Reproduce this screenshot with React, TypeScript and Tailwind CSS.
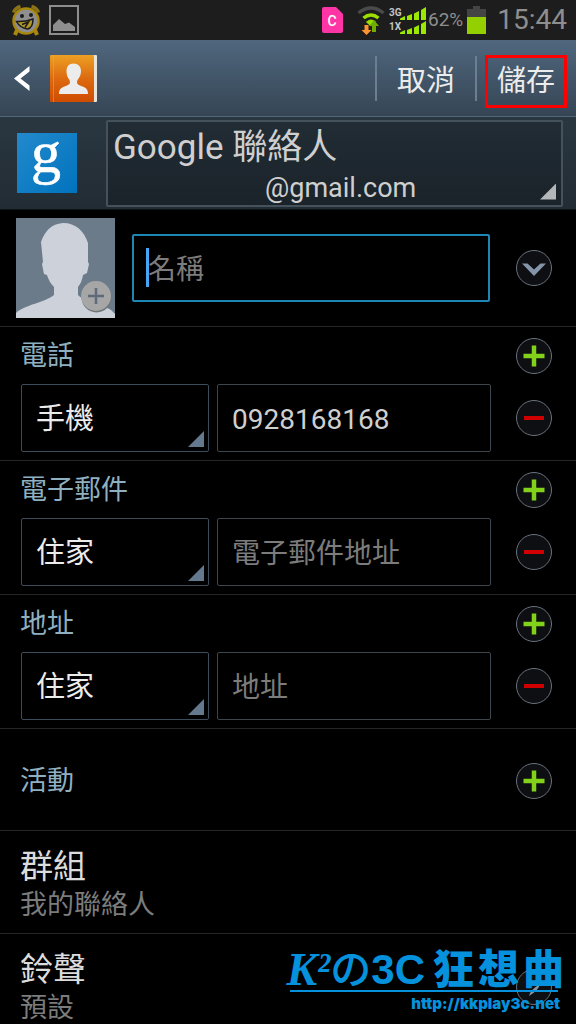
import { useState } from "react"
import type { ReactNode } from "react"

function AlarmIcon() {
  return (
    <svg width="30" height="32" viewBox="0 0 30 32" aria-hidden="true">
      <path d="M2.500 8.500Q4 4 9.500 2.500M20.500 2.500Q26 4 27.500 8.500" stroke="#8a7216" strokeWidth="3.500" fill="none" />
      <path d="M6 26l-2 5M24 26l2 5" stroke="#a8870e" strokeWidth="4" />
      <circle cx="15" cy="17" r="12.500" fill="#8f8f8f" stroke="#a8870e" strokeWidth="2.500" />
      <circle cx="11" cy="12" r="2" fill="#1a1a1a" />
      <circle cx="20" cy="11" r="2" fill="#1a1a1a" />
      <path d="M5.500 17.500Q14 18 22 15Q22 24 16.500 25Q9 24 5.500 17.500z" fill="#b09526" stroke="#1a1a1a" strokeWidth="1.500" />
      <path d="M11 20.500L17.500 18L14 23.500" stroke="#1a1a1a" strokeWidth="1.500" fill="none" />
    </svg>
  )
}

function PictureIcon() {
  return (
    <svg width="30" height="30" viewBox="0 0 30 30" aria-hidden="true">
      <rect x="1" y="1" width="28" height="28" fill="none" stroke="#8e8e8e" strokeWidth="2" />
      <path d="M4 26V20L10 14L16 19L20 17.500L26 22V26z" fill="#8e8e8e" />
    </svg>
  )
}

function WifiIcon() {
  return (
    <svg width="28" height="30" viewBox="0 0 28 30" fill="none" aria-hidden="true">
      <path d="M1.500 8Q14-2 26.500 8" stroke="#4a4a4a" strokeWidth="3.500" />
      <path d="M6.500 13Q14 7 21.500 13" stroke="#9be000" strokeWidth="3.500" />
      <path d="M9.500 17Q14 13 18.500 17L14 21z" fill="#9be000" stroke="#9be000" />
      <path d="M7.500 20h4v5h3l-5 5l-5-5h3z" fill="#ff9530" />
      <path d="M15 27h4v-6h3l-5-6l-5 6h3z" fill="#6fae00" />
    </svg>
  )
}

function Bars() {
  return (
    <svg width="26" height="13" viewBox="0 0 26 13" fill="#9be800" aria-hidden="true">
      <path d="M0 13V11.500L5 9V13zM7 13V9L12 7V13zM14 13V6.500L19 4V13zM21 13V3L26 0V13z" />
    </svg>
  )
}

function StatusBar() {
  return (
    <div className="flex h-10 items-center bg-[#1d1d1d] pl-[11px] pr-[9px] text-[#8e8e8e]">
      <div className="flex flex-1 items-center gap-2">
        <AlarmIcon />
        <PictureIcon />
      </div>
      <svg className="mr-[14px]" width="21" height="26" viewBox="0 0 21 26" aria-hidden="true">
        <path d="M2 0H14L21 7V24Q21 26 19 26H2Q0 26 0 24V2Q0 0 2 0z" fill="#ff35a5" />
        <text x="10" y="19" textAnchor="middle" fill="#fff" fontSize="14" fontWeight="500">C</text>
      </svg>
      <WifiIcon />
      <div className="ml-1 flex items-center">
        <div className="flex w-[11px] flex-col text-[10px] font-bold leading-[14px] text-[#c4c4c4]">
          <span>3G</span>
          <span>1X</span>
        </div>
        <div className="flex flex-col gap-px">
          <Bars />
          <Bars />
        </div>
      </div>
      <span className="ml-[2px] text-[19px] leading-6">62%</span>
      <svg className="ml-1" width="19" height="28" viewBox="0 0 19 28" aria-hidden="true">
        <path d="M6 0h7v3h6v25h-19v-25h6z" fill="#444" />
        <path d="M0 11h19v17h-19z" fill="#94d000" />
      </svg>
      <span className="ml-[11px] text-[28px] leading-8">15:44</span>
    </div>
  )
}

function ContactIcon() {
  return (
    <svg width="47" height="47" viewBox="0 0 47 47" aria-hidden="true">
      <defs>
        <linearGradient id="book" x1="0" y1="0" x2="0" y2="1">
          <stop offset="0" stopColor="#eca024" />
          <stop offset="0.5" stopColor="#dd6a10" />
          <stop offset="1" stopColor="#cf4c00" />
        </linearGradient>
      </defs>
      <rect x="2" y="0" width="45" height="47" rx="1" fill="#e8e4dc" />
      <rect width="44" height="47" rx="1" fill="url(#book)" />
      <path d="M3.500 0V47" stroke="#f0a850" strokeOpacity="0.5" />
      <path d="M23.500 8.500C28 8.500 31 11.500 31 16C31 20 29.500 22 27.500 25C26.500 28 27 29 30 30.500C35 32.500 38 33 38 39H9C9 33 12 32.500 17 30.500C20 29 20.500 28 19.500 25C17.500 22 16.500 20 16.500 16C16.500 11.500 19 8.500 23.500 8.500z" fill="#ececec" />
    </svg>
  )
}

function ActionBar() {
  return (
    <header className="flex h-[77px] items-center border-b border-[#4f6879] bg-linear-to-b from-[#50677e] to-[#354554]">
      <button aria-label="返回" className="ml-[14px] mr-5">
        <svg width="16" height="25" viewBox="0 0 16 25" aria-hidden="true">
          <path d="M15.500 0V5.500L6.500 12.500L15.500 19.500V25L0 12.500z" fill="#fff" />
        </svg>
      </button>
      <ContactIcon />
      <div className="ml-auto flex items-center">
        <div className="h-[45px] w-[2px] bg-[#6b7f90]" />
        <button className="w-[98px] pt-1.5 text-[29px] leading-9 text-[#ececec]">取消</button>
        <div className="h-[45px] w-[2px] bg-[#6b7f90]" />
        <button className="ml-[8px] mr-[9px] mt-1.5 h-[53px] w-[82px] border-3 border-[#ff0000] text-[29px] leading-9 text-[#ececec]">儲存</button>
      </div>
    </header>
  )
}

function AccountBar() {
  return (
    <div className="flex h-[93px] items-center border-b border-[#0d1418] bg-linear-to-b from-[#2a3741] to-[#222c34] pl-[17px] pr-[13px]">
      <svg className="overflow-visible" width="60" height="60" viewBox="0 0 60 60" role="img" aria-label="Google">
        <defs>
          <linearGradient id="google" x1="0" y1="0" x2="1" y2="1">
            <stop offset="0" stopColor="#2389cc" />
            <stop offset="1" stopColor="#0073bd" />
          </linearGradient>
        </defs>
        <rect width="60" height="60" fill="url(#google)" />
        <text x="29" y="39" textAnchor="middle" fill="#fff" stroke="#fff" strokeWidth="0.6" fontFamily="'Liberation Serif', serif" fontSize="60">g</text>
      </svg>
      <button className="relative ml-[29px] flex h-[87px] flex-1 flex-col rounded-xs border-2 border-[#46525b] bg-linear-to-b from-[#212c34] to-[#1b232a] px-[5px] text-left text-[#cfcfcf]">
        <span className="h-[49px] text-[35px] leading-[52px]">Google 聯絡人</span>
        <span className="ml-[152px] text-[27px] leading-[34px]">@gmail.com</span>
        <Corner className="bg-[#b4b7ba]" />
      </button>
    </div>
  )
}

// small triangle in the lower right of every spinner
function Corner({ className }: { className: string }) {
  return <span className={"pointer-events-none absolute bottom-[5px] right-[5px] size-4 [clip-path:polygon(100%_0,100%_100%,0_100%)] " + className} />
}

function RoundButton({ label, children }: { label: string; children: ReactNode }) {
  return (
    <button aria-label={label} className="flex size-9 shrink-0 items-center justify-center rounded-full border border-[#69727c] bg-[#0d0f12]">
      <svg width="34" height="34" viewBox="0 0 34 34" fill="none" aria-hidden="true">
        {children}
      </svg>
    </button>
  )
}

function AddButton({ label }: { label: string }) {
  return (
    <RoundButton label={label}>
      <path d="M17 6.500V27.500M6.500 17H27.500" stroke="#82d21c" strokeWidth="4.500" />
    </RoundButton>
  )
}

function RemoveButton({ label }: { label: string }) {
  return (
    <RoundButton label={label}>
      <path d="M7 17H27" stroke="#d00000" strokeWidth="4" />
    </RoundButton>
  )
}

function NameRow() {
  const [name, setName] = useState("")
  return (
    <section className="flex items-center border-b border-[#262626] pb-2 pl-4 pr-6 pt-2">
      <button aria-label="新增相片">
        <svg width="99" height="100" viewBox="0 0 99 100" aria-hidden="true">
          <rect width="99" height="100" fill="#6c7b8a" />
          <path d="M47 5C60 5 68 13 72 25V44L73 46L71 55L67 57Q66 64 62 69V77C68 84 90 88 95 92L99 96V100H0V95C8 87 30 84 38 77V69Q33 64 31 57L28 56L26 46L27 44L25 24C29 13 35 6 47 5z" fill="#cdd2da" />
          <circle cx="80.500" cy="79.500" r="15" fill="#6f7478" />
          <circle cx="80" cy="78" r="15" fill="#a6a6a6" />
          <path d="M80 70V86M72 78H88" stroke="#5d6b7b" strokeWidth="2.500" />
        </svg>
      </button>
      <div className="relative ml-[17px] min-w-0 flex-1">
        <input
          aria-label="名稱"
          placeholder="名稱"
          value={name}
          onChange={(e) => setName(e.target.value)}
          className="h-[68px] w-full rounded-xs border-2 border-[#1d86b3] bg-black px-[14px] pt-0.5 text-[28px] text-[#cfcfcf] caret-[#46a6f5] outline-none placeholder:text-[#7c7c7c]"
        />
        {name === "" && <span className="pointer-events-none absolute left-[14px] top-[14px] h-[39px] w-[3px] bg-[#46a6f5]" />}
      </div>
      <div className="ml-[26px] flex">
        <RoundButton label="展開">
          <path d="M5 12.500H10.500L17 18.500L23.500 12.500H29L17 25z" fill="#8495aa" />
        </RoundButton>
      </div>
    </section>
  )
}

type FieldProps = { id: string; title: string; types: string[]; placeholder: string; value?: string }

function FieldSection({ id, title, types, placeholder, value }: FieldProps) {
  return (
    <section className="border-b border-[#262626] pb-2 pl-[21px] pr-6">
      <div className="-ml-px flex h-[57px] items-center justify-between">
        <label htmlFor={id} className="text-[27px] leading-8 text-[#8fb0c0]">{title}</label>
        <AddButton label={"新增" + title} />
      </div>
      <div className="flex items-center">
        <div className="relative w-[188px] shrink-0">
          <select aria-label={title + "類型"} className="h-[68px] w-full appearance-none rounded-xs border border-[#3c4c5a] bg-black px-[14px] pt-1 text-[29px] text-[#ececec] outline-none">
            {types.map((t) => <option key={t}>{t}</option>)}
          </select>
          <Corner className="bg-[#64788e]" />
        </div>
        <input
          id={id}
          defaultValue={value}
          placeholder={placeholder}
          className="ml-2 mr-[25px] h-[68px] min-w-0 flex-1 rounded-xs border border-[#3c464c] bg-black px-[14px] pt-0.5 text-[28px] text-[#cfcfcf] outline-none placeholder:text-[#7c7c7c]"
        />
        <RemoveButton label={"移除" + title} />
      </div>
    </section>
  )
}

function InfoText({ title, detail }: { title: string; detail: string }) {
  return (
    <div className="flex flex-col gap-0.5">
      <span className="text-[33px] leading-10 text-[#dcdcdc]">{title}</span>
      <span className="text-[27px] leading-8 text-[#7c7c7c]">{detail}</span>
    </div>
  )
}

function Watermark() {
  return (
    <div className="pointer-events-none absolute bottom-2 right-3 flex flex-col items-end font-black text-[#0591dc]">
      <div className="flex h-10 items-center leading-10">
        <span className="font-['Liberation_Serif'] text-[46px] italic">K</span>
        <span className="font-['Liberation_Serif'] text-[44px] italic">²</span>
        <span className="text-[41px] font-medium">の</span>
        <span className="mr-2 font-['Liberation_Sans'] text-[42px] font-bold">3C</span>
        <span className="flex gap-1 text-[41px]">
          <span>狂</span>
          <span>想</span>
          <span>曲</span>
        </span>
      </div>
      <div className="mr-1.5 h-[2px] w-[268px] bg-[#0591dc]" />
      <span className="mr-1 font-[Inter] text-[15px] leading-6">http://kkplay3c.net</span>
    </div>
  )
}

export default function App() {
  return (
    <div className="relative min-h-screen overflow-hidden bg-black font-[Roboto,'Noto_Sans_CJK_TC',sans-serif]">
      <StatusBar />
      <ActionBar />
      <AccountBar />
      <main>
        <NameRow />
        <FieldSection id="phone" title="電話" types={["手機", "住家"]} placeholder="電話" value="0928168168" />
        <FieldSection id="email" title="電子郵件" types={["住家", "公司"]} placeholder="電子郵件地址" />
        <FieldSection id="address" title="地址" types={["住家", "公司"]} placeholder="地址" />
        <section className="flex h-[102px] items-center justify-between border-b border-[#262626] pl-5 pr-6 pt-0.5">
          <span className="text-[27px] leading-8 text-[#8fb0c0]">活動</span>
          <AddButton label="新增活動" />
        </section>
        <section className="border-b border-[#262626] pb-3 pl-5 pr-6 pt-4">
          <InfoText title="群組" detail="我的聯絡人" />
        </section>
        <section className="flex items-center justify-between pl-5 pr-6 pt-4">
          <InfoText title="鈴聲" detail="預設" />
          <RoundButton label="選擇鈴聲">
            <path d="M12 26Q13 20 23 14Q22 20 12 26z" fill="#8495aa" />
          </RoundButton>
        </section>
      </main>
      <Watermark />
    </div>
  )
}
